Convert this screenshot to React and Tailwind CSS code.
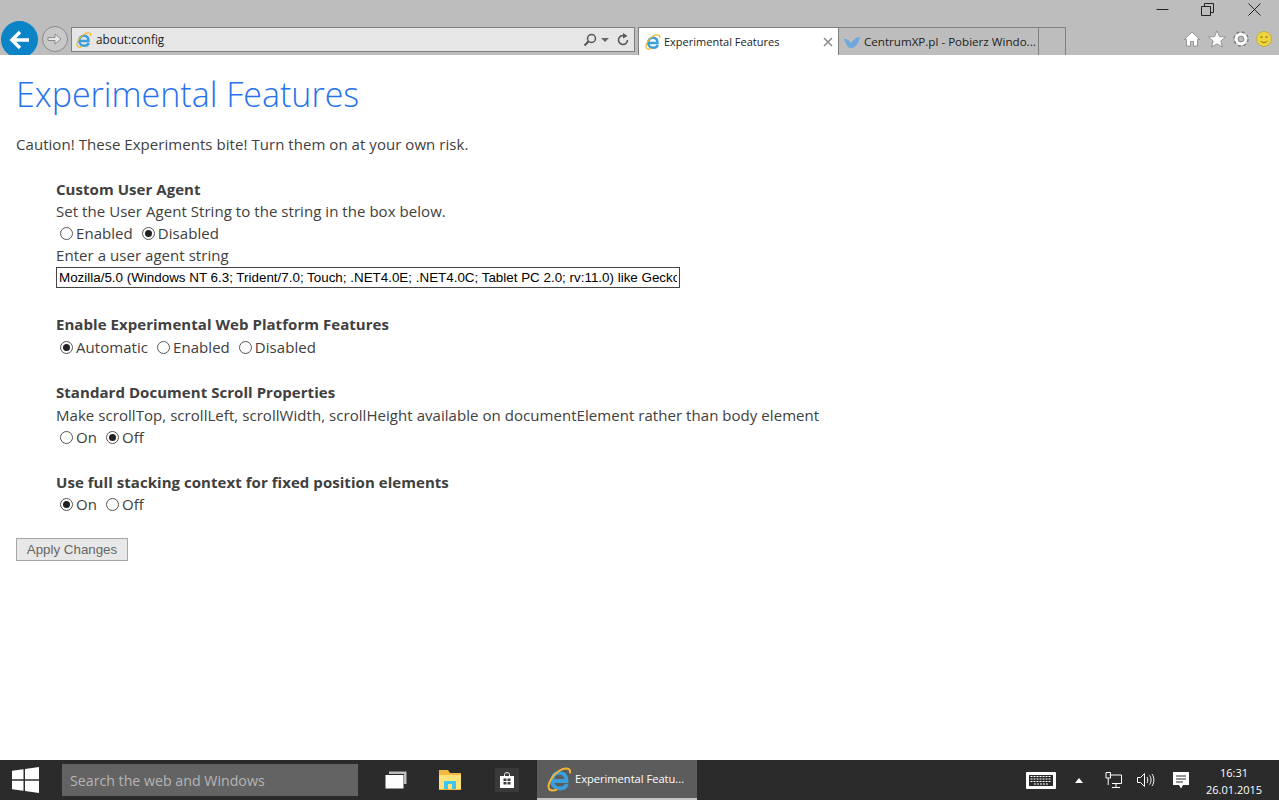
import React from "react";

const IeIcon = ({ size = 16 }) => (
  <svg width={size} height={size} viewBox="0 0 32 32" className="shrink-0">
    <path d="M6.500 18H25C25 11 21 7.500 16 7.500C10 7.500 6.500 12 6.500 18C6.500 24 11 27.500 17 27.500C21 27.500 24 26 25.500 22" fill="none" stroke="#3a9fdd" strokeWidth="5" />
    <path d="M29 8C32 2 24 0 16 4.500C7 10 0 22 2.500 27.500C4 31 9 30.500 13 28.500" fill="none" stroke="#f2b632" strokeWidth="2.500" />
  </svg>
);

const BirdIcon = () => (
  <svg width="16" height="16" viewBox="0 0 16 16" className="shrink-0">
    <path d="M0 5C3 4 5 7 7 9C9 6 12 3 16 3C15 8 12 14 7 14C3 14 2 9 0 5Z" fill="#6fa8dc" />
  </svg>
);

const Radio = ({ label, checked }) => (
  <label className="flex items-center mr-[5px]">
    <span className="w-[13px] h-[13px] rounded-full border border-[#555] bg-white flex items-center justify-center ml-[4px] mr-[3px]">
      {checked && <span className="w-[7px] h-[7px] rounded-full bg-[#222]" />}
    </span>
    {label}
  </label>
);

const RadioRow = ({ options }) => (
  <div className="flex h-[22px] items-center">
    {options.map((o) => (
      <Radio key={o.label} label={o.label} checked={o.checked} />
    ))}
  </div>
);

const Heading = ({ children, tall }) => (
  <h2 className={tall ? "h-[23px] leading-[22px] font-bold text-[#404040] tracking-[0.05px]" : "h-[22px] leading-[22px] font-bold text-[#404040] tracking-[0.05px]"}>
    {children}
  </h2>
);

const Line = ({ children }) => <p className="h-[22px] leading-[22px]">{children}</p>;

const Toolbar = () => (
  <header className="h-[55px] shrink-0 bg-[#bdbdbd] overflow-hidden relative">
    <div className="flex h-[21px] justify-end items-start pr-[18px] pt-[3px] text-[#222]">
      <svg width="13" height="13" viewBox="0 0 13 13" className="mr-[32px]">
        <path d="M0.500 6.500H12.500" stroke="#222" />
      </svg>
      <svg width="13" height="13" viewBox="0 0 13 13" className="mr-[34px]">
        <path d="M0.500 3.500H9.500V12.500H0.500ZM3.500 3V0.500H12.500V9.500H10" fill="none" stroke="#222" />
      </svg>
      <svg width="13" height="13" viewBox="0 0 13 13">
        <path d="M0.500 0.500L12.500 12.500M12.500 0.500L0.500 12.500" stroke="#222" />
      </svg>
    </div>
    <div className="flex items-start h-[34px] pt-[6px]">
      <div className="w-[37px] h-[37px] rounded-full bg-[#0a84c6] ml-[1px] -mt-[6px] flex items-center justify-center shrink-0">
        <svg width="22" height="22" viewBox="0 0 22 22">
          <path d="M3 11H20M11 3L3 11L11 19" fill="none" stroke="white" strokeWidth="3.500" />
        </svg>
      </div>
      <div className="w-[26px] h-[26px] rounded-full border border-[#8a8a8a] bg-[#c8c8c8] ml-[4px] -mt-[1px] flex items-center justify-center shrink-0">
        <svg width="16" height="16" viewBox="0 0 16 16">
          <path d="M1 6.500H8V3L14 8L8 13V9.500H1Z" fill="#e8e8e8" stroke="#8a8a8a" />
        </svg>
      </div>
      <div className="w-[564px] h-[25px] ml-[3px] border border-[#7f7f7f] bg-[#e6e6e6] flex items-center pl-[4px] pr-[4px] shrink-0">
        <IeIcon />
        <span className="ml-[4px] pt-[1px] text-[11.700px] text-[#222] flex-1">about:config</span>
        <svg width="14" height="14" viewBox="0 0 14 14">
          <circle cx="8.500" cy="5.500" r="4" fill="none" stroke="#555" strokeWidth="1.500" />
          <path d="M5.500 8.500L1.500 12.500" stroke="#555" strokeWidth="2" />
        </svg>
        <svg width="8" height="8" viewBox="0 0 8 8" className="ml-[4px]">
          <path d="M0 2H8L4 6Z" fill="#666" />
        </svg>
        <svg width="14" height="14" viewBox="0 0 14 14" className="ml-[7px]">
          <path d="M11.500 7A4.500 4.500 0 1 1 8.500 2.700" fill="none" stroke="#555" strokeWidth="1.500" />
          <path d="M7 0L11.500 3L7 5.500Z" fill="#555" />
        </svg>
      </div>
      <div className="w-[201px] h-[29px] ml-[3px] border-t border-l border-r border-[#7f7f7f] bg-white flex items-center pl-[6px] pr-[5px] shrink-0">
        <IeIcon />
        <span className="ml-[3px] text-[11px] text-[#222] flex-1">Experimental Features</span>
        <svg width="10" height="10" viewBox="0 0 10 10">
          <path d="M1 1L9 9M9 1L1 9" stroke="#8a8a8a" strokeWidth="1.500" />
        </svg>
      </div>
      <div className="w-[200px] h-[29px] border-t border-r border-[#7f7f7f] flex items-center pl-[5px] shrink-0">
        <BirdIcon />
        <span className="ml-[4px] text-[11.600px] text-[#222] whitespace-nowrap">CentrumXP.pl - Pobierz Windo...</span>
      </div>
      <div className="w-[27px] h-[29px] border-t border-r border-[#7f7f7f] shrink-0" />
      <div className="ml-auto flex items-center gap-[7px] pr-[7px] h-[26px] -mt-[1px]">
        <svg width="16" height="16" viewBox="0 0 16 16" className="mr-[1px]">
          <path d="M8 1L15.500 8.500H13.500V15H9.500V10.500H6.500V15H2.500V8.500H0.500Z" fill="white" stroke="#777" strokeWidth="0.700" />
        </svg>
        <svg width="18" height="18" viewBox="0 0 18 18">
          <path d="M9 0.800L11.400 6.600L17.500 7L12.800 11L14.300 17L9 13.800L3.700 17L5.200 11L0.500 7L6.600 6.600Z" fill="white" stroke="#777" strokeWidth="0.700" />
        </svg>
        <svg width="16" height="16" viewBox="0 0 16 16">
          <circle cx="8" cy="8" r="5.500" fill="none" stroke="#777" strokeWidth="4.500" strokeDasharray="2.200 2.120" />
          <circle cx="8" cy="8" r="4.800" fill="none" stroke="white" strokeWidth="3" />
          <circle cx="8" cy="8" r="2.800" fill="none" stroke="#777" strokeWidth="0.700" />
        </svg>
        <svg width="16" height="16" viewBox="0 0 16 16">
          <circle cx="8" cy="8" r="7.500" fill="#f0d43c" stroke="#b5a243" strokeWidth="0.700" />
          <circle cx="5.500" cy="6" r="1" fill="#8a7a20" />
          <circle cx="10.500" cy="6" r="1" fill="#8a7a20" />
          <path d="M4.500 10C6 12 10 12 11.500 10" fill="none" stroke="#8a7a20" />
        </svg>
      </div>
    </div>
  </header>
);

const Taskbar = () => (
  <footer className="h-[40px] shrink-0 bg-[#2b2b2b] flex items-center text-white relative">
    <svg width="27" height="26" viewBox="0 0 27 26" className="ml-[12px]">
      <path d="M0 3.800L11.500 2.200V12.300H0ZM13 2L27 0V12.300H13ZM0 13.800H11.500V23.800L0 22.200ZM13 13.800H27V26L13 24Z" fill="white" />
    </svg>
    <div className="w-[296px] h-[32px] ml-[23px] bg-[#636363] text-[#b5b5b5] text-[14.200px] flex items-center pl-[8px] pt-[1px]">
      Search the web and Windows
    </div>
    <svg width="22" height="18" viewBox="0 0 22 18" className="ml-[27px]">
      <path d="M4 0.500H21.500V13H19V3H4Z" fill="#bdbdbd" />
      <path d="M0.500 4H18.500V17.500H0.500Z" fill="white" />
    </svg>
    <svg width="22" height="20" viewBox="0 0 22 20" className="ml-[32px]">
      <path d="M0 0H9L11 3H22V20H0Z" fill="#f5b942" />
      <path d="M0 5H22V19H0Z" fill="#ffe27a" />
      <path d="M5 19V11H17V19H13V14H9V19Z" fill="#3fc6ee" />
    </svg>
    <div className="w-[24px] h-[24px] ml-[34px] bg-[#3a3a3a] flex items-center justify-center">
      <svg width="14" height="16" viewBox="0 0 14 16">
        <path d="M4.500 4V2.500C4.500 0 9.500 0 9.500 2.500V4" fill="none" stroke="white" />
        <path d="M0 4H14V16H0ZM3.500 6.500V9H6.500V6.500ZM7.500 6.500V9H10.500V6.500ZM3.500 10V12.500H6.500V10ZM7.500 10V12.500H10.500V10Z" fill="white" fillRule="evenodd" />
      </svg>
    </div>
    <div className="w-[160px] h-[40px] ml-[18px] bg-[#5c5c5c] border-b-2 border-[#c4c4c4] flex items-center pl-[10px]">
      <IeIcon size={25} />
      <span className="ml-[3px] text-[11.100px] whitespace-nowrap">Experimental Featu...</span>
    </div>
    <svg width="30" height="17" viewBox="0 0 30 17" className="ml-auto">
      <path d="M0.500 0.500H29.500V16.500H0.500Z" fill="white" stroke="white" />
      <path d="M3 3H27V14H3Z" fill="#2b2b2b" />
      <path d="M4.500 4.500H25.500M4.500 7H25.500M4.500 9.500H25.500M8 12H22" stroke="white" strokeDasharray="2 1" />
    </svg>
    <svg width="8" height="5" viewBox="0 0 8 5" className="ml-[19px]">
      <path d="M0 5L4 0L8 5Z" fill="white" />
    </svg>
    <svg width="17" height="16" viewBox="0 0 17 16" className="ml-[22px]">
      <path d="M4.500 3H16.500V11.500H7M11 11.500V15M7 15.500H15" fill="none" stroke="white" />
      <path d="M1 0.500H5.500V6H1ZM3.200 6V13" fill="none" stroke="white" />
    </svg>
    <svg width="18" height="16" viewBox="0 0 18 16" className="ml-[15px]">
      <path d="M0.500 5.500H3.500L7.500 1.500V14.500L3.500 10.500H0.500Z" fill="none" stroke="white" />
      <path d="M10 5C11 6.500 11 9.500 10 11M12.500 3.500C14.500 6 14.500 10 12.500 12.500M15 2C17.500 5.500 17.500 10.500 15 14" fill="none" stroke="white" />
    </svg>
    <svg width="16" height="17" viewBox="0 0 16 17" className="ml-[18px]">
      <path d="M0 0H16V13H10L8 16.500L6 13H0ZM3 3.500V4.500H13V3.500ZM3 6.500V7.500H13V6.500ZM3 9.500V10.500H10V9.500Z" fill="white" fillRule="evenodd" />
    </svg>
    <div className="w-[56px] ml-[17px] mr-[17px] pt-[2px] text-[11px] leading-[17px] text-center">
      <div>16:31</div>
      <div className="whitespace-nowrap">26.01.2015</div>
    </div>
  </footer>
);

export default function App() {
  return (
    <div className="h-screen flex flex-col overflow-hidden bg-white font-['Open_Sans','Liberation_Sans',sans-serif]">
      <Toolbar />
      <main className="flex-1 pl-[16px] text-[15px] text-[#404040] tracking-[0.05px]">
        <h1 className="pt-[15px] text-[34px] leading-[48px] font-light text-[#2672ec] tracking-normal">
          Experimental Features
        </h1>
        <p className="mt-[15px] h-[22px] leading-[22px]">
          Caution! These Experiments bite! Turn them on at your own risk.
        </p>
        <div className="ml-[40px] mt-[23px]">
          <Heading>Custom User Agent</Heading>
          <Line>Set the User Agent String to the string in the box below.</Line>
          <RadioRow
            options={[
              { label: "Enabled" },
              { label: "Disabled", checked: true },
            ]}
          />
          <Line>Enter a user agent string</Line>
          <input
            readOnly
            value="Mozilla/5.0 (Windows NT 6.3; Trident/7.0; Touch; .NET4.0E; .NET4.0C; Tablet PC 2.0; rv:11.0) like Gecko"
            className="block mt-[1px] w-[624px] h-[21px] border border-[#444] px-[2px] pb-[1px] text-[13.400px] text-black tracking-normal font-['Liberation_Sans',sans-serif] outline-none"
          />
          <div className="mt-[25px]">
            <Heading tall>Enable Experimental Web Platform Features</Heading>
            <RadioRow
              options={[
                { label: "Automatic", checked: true },
                { label: "Enabled" },
                { label: "Disabled" },
              ]}
            />
          </div>
          <div className="mt-[23px]">
            <Heading tall>Standard Document Scroll Properties</Heading>
            <Line>Make scrollTop, scrollLeft, scrollWidth, scrollHeight available on documentElement rather than body element</Line>
            <RadioRow
              options={[
                { label: "On" },
                { label: "Off", checked: true },
              ]}
            />
          </div>
          <div className="mt-[23px]">
            <Heading>Use full stacking context for fixed position elements</Heading>
            <RadioRow
              options={[
                { label: "On", checked: true },
                { label: "Off" },
              ]}
            />
          </div>
        </div>
        <button className="mt-[23px] block w-[112px] h-[23px] border border-[#a6a6a6] bg-[#e8e8e8] text-[13.333px] text-[#666] tracking-normal font-['Liberation_Sans',sans-serif]">
          Apply Changes
        </button>
      </main>
      <Taskbar />
    </div>
  );
}
